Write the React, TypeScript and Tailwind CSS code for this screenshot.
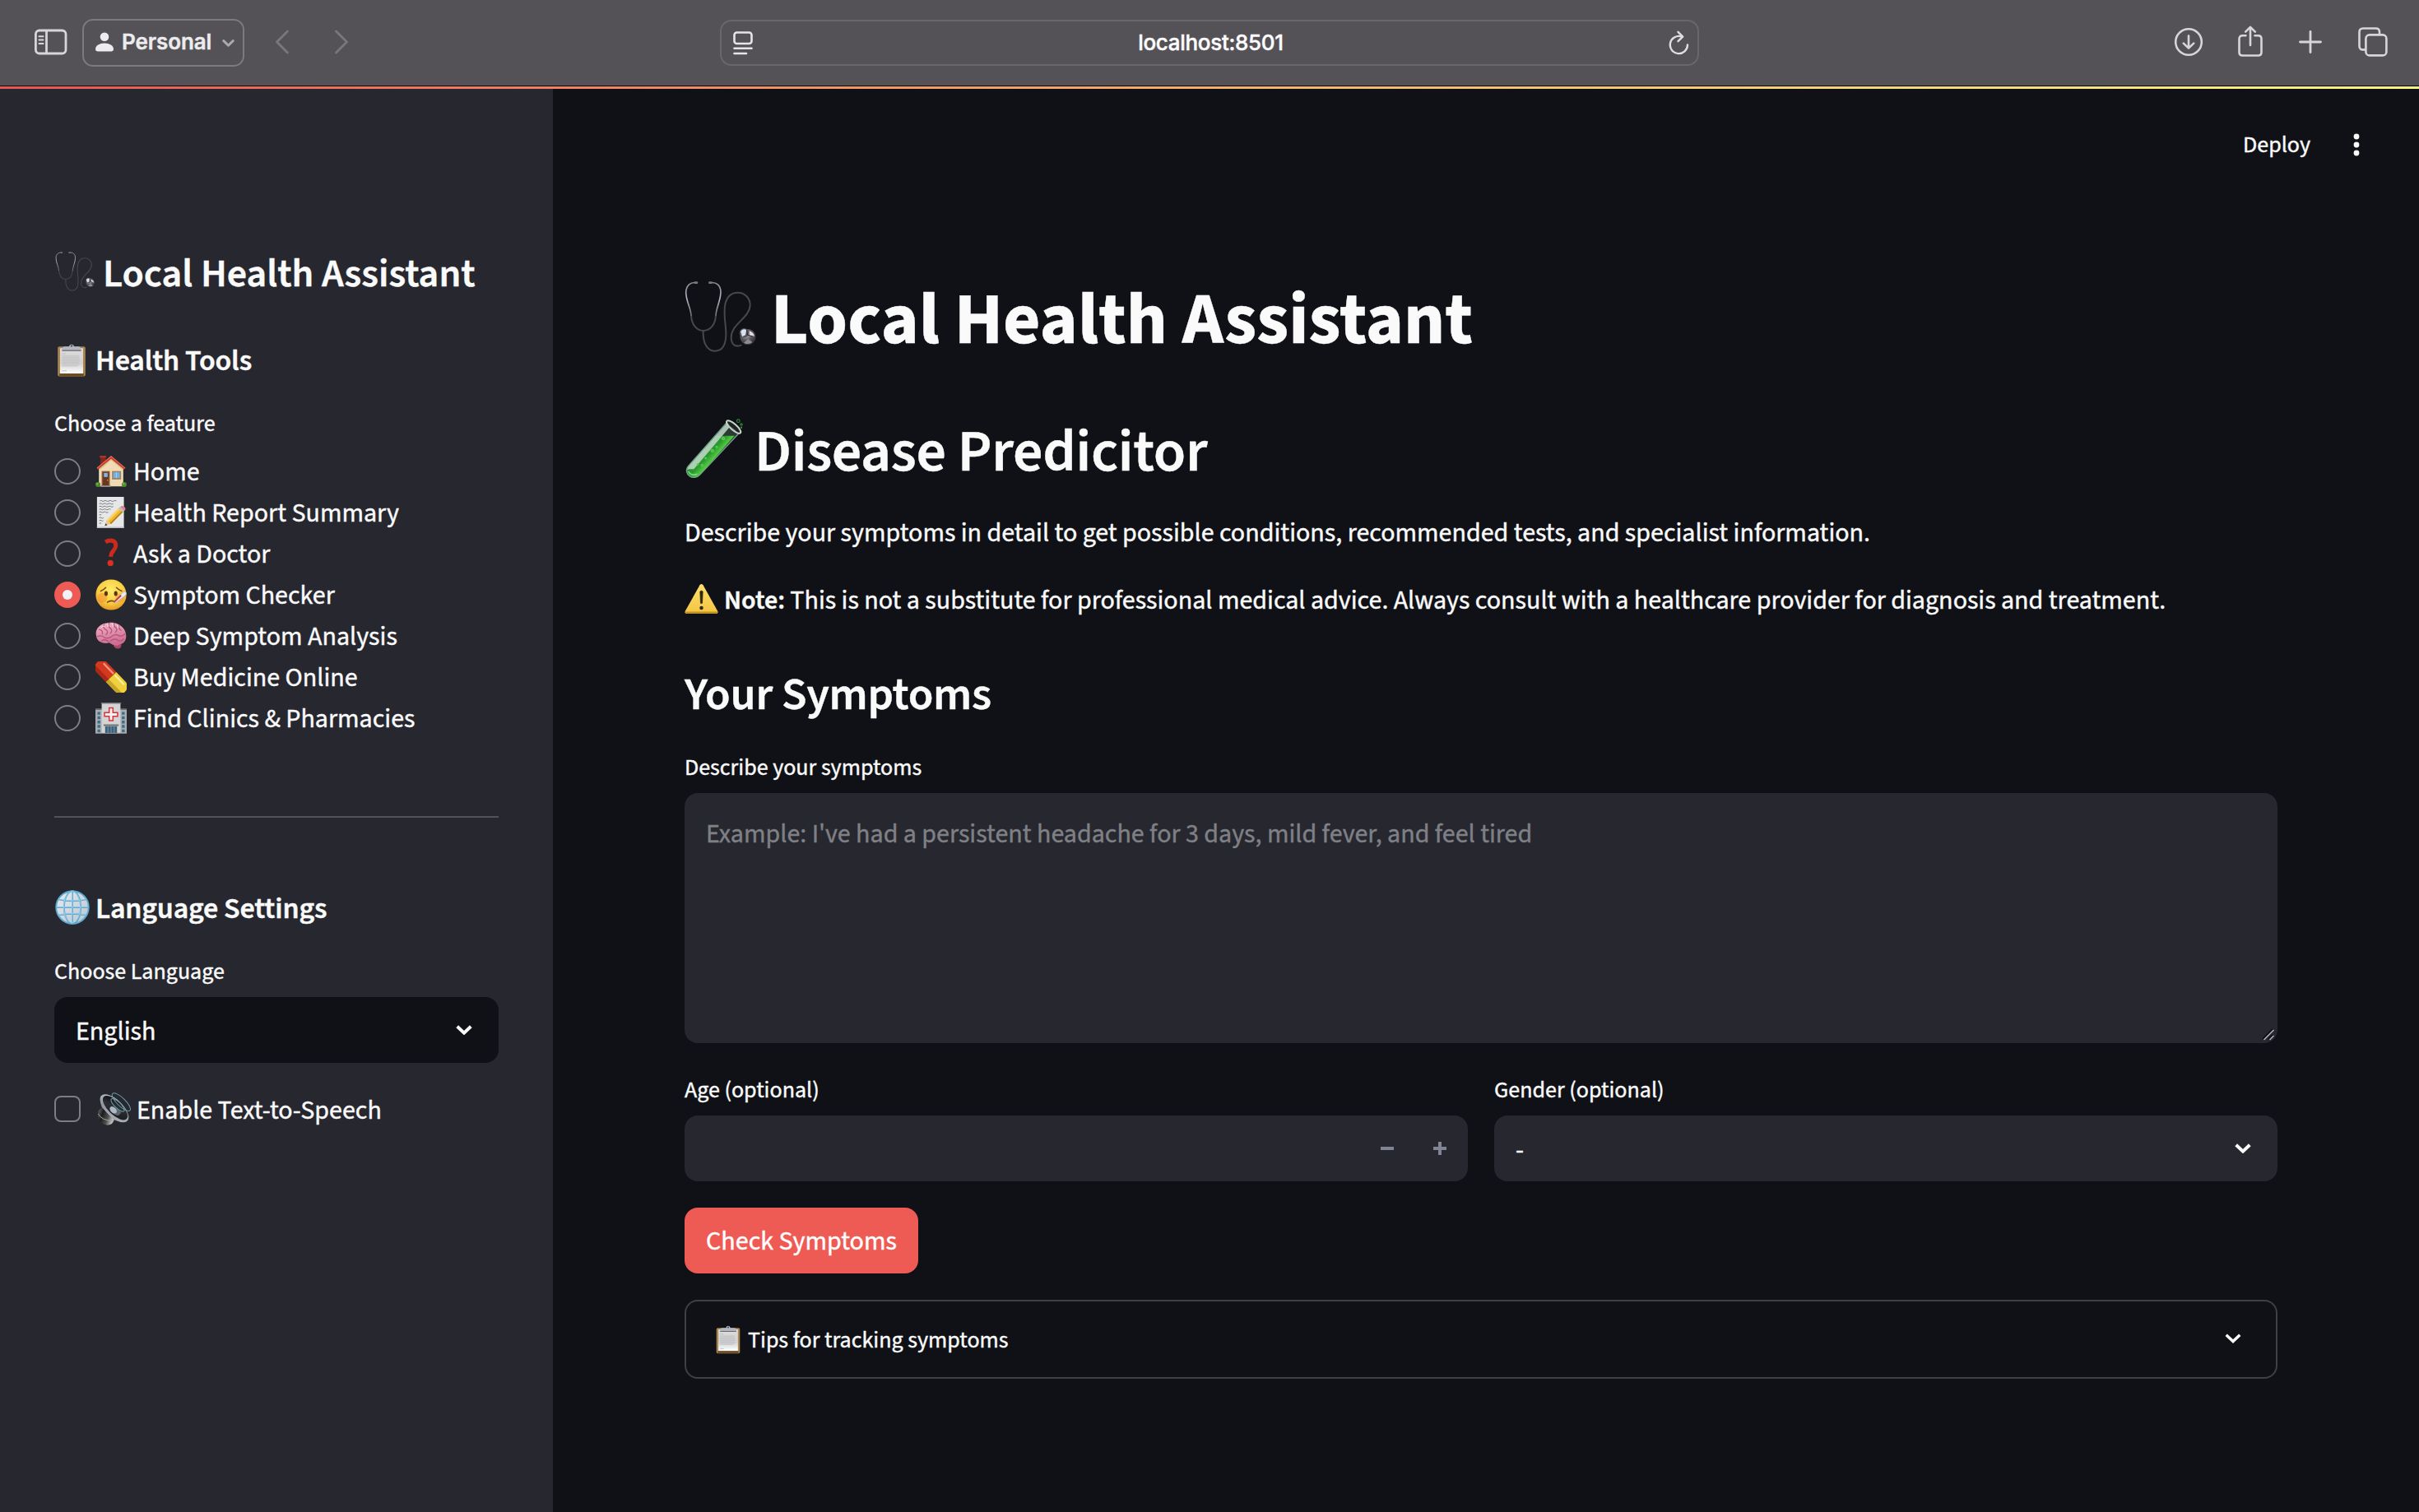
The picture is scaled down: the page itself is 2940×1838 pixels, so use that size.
import React from "react";

type IconProps = { className?: string };

/* ---------- emoji drawings ---------- */

function Stethoscope({ className }: IconProps) {
  return (
    <svg className={className} viewBox="30 60 270 270" fill="none" strokeLinecap="round">
      <defs>
        <linearGradient id="steth-arm" x1="0" y1="0" x2="0" y2="1">
          <stop offset="0" stopColor="#8b8c92" />
          <stop offset="0.5" stopColor="#b4b5bd" />
          <stop offset="1" stopColor="#6c6c72" />
        </linearGradient>
        <radialGradient id="steth-disc" cx="0.4" cy="0.35" r="0.7">
          <stop offset="0" stopColor="#b9b8bd" />
          <stop offset="0.5" stopColor="#5b595e" />
          <stop offset="1" stopColor="#2c2a2d" />
        </radialGradient>
      </defs>
      <g stroke="#48474a" strokeWidth="6">
        <path d="M60 190C62 224 80 246 104 246C130 246 148 224 150 190" />
        <path d="M104 246C102 290 118 320 146 320C174 320 187 296 187 258C187 220 177 190 184 150C190 122 206 107 230 107C256 107 276 128 275 155C272 200 206 222 206 270C206 298 222 307 242 299" />
      </g>
      <path d="M78 71C58 68 42 80 41 106C41 138 58 160 60 190" stroke="url(#steth-arm)" strokeWidth="5" />
      <path d="M130 71C152 68 168 80 168 106C167 138 152 160 150 190" stroke="url(#steth-arm)" strokeWidth="5" />
      <path d="M75 71H81M127 71H133" stroke="#77787d" strokeWidth="8" />
      <circle cx="267" cy="269" r="29" fill="url(#steth-disc)" />
      <circle cx="253" cy="254" r="17" fill="#55545a" />
      <path d="M241 250C243 241 254 238 262 243L258 262L246 268Z" fill="#d9e2ee" />
      <path d="M272 247C284 250 291 260 291 270L274 264Z" fill="#dddce0" />
      <path d="M252 290C262 296 276 295 283 288L268 276Z" fill="#8f8d92" />
      <path d="M262 243L266 262L291 268" stroke="#2d2b2f" strokeWidth="3" />
    </svg>
  );
}

function TestTube({ className }: IconProps) {
  return (
    <svg className={className} viewBox="30 560 225 225" fill="none">
      <defs>
        <linearGradient id="tube-liquid" x1="90" y1="680" x2="140" y2="725" gradientUnits="userSpaceOnUse">
          <stop offset="0" stopColor="#2e8a38" />
          <stop offset="0.55" stopColor="#2a9a2b" />
          <stop offset="1" stopColor="#5fdc4c" />
        </linearGradient>
      </defs>
      <path d="M190 580L50 738C38 752 44 768 54 775C66 784 82 781 92 770L238 618Z" fill="#2a3a35" />
      <path d="M148 628H218L92 770C82 781 66 784 54 775C44 768 38 752 50 738Z" fill="url(#tube-liquid)" />
      <path d="M190 582L52 738C45 747 44 756 52 750L70 750L204 592Z" fill="#c3d8cc" opacity="0.85" />
      <path d="M189 581L50 738C38 752 44 768 54 775C66 784 82 781 92 770L236 617" stroke="#74a283" strokeWidth="4" />
      <path d="M50 758C54 768 68 774 82 768" stroke="#7fd68c" strokeWidth="5" />
      <ellipse cx="215" cy="596" rx="33" ry="11" transform="rotate(41 215 596)" fill="#1c2622" stroke="#cfd3d0" strokeWidth="6" />
      <path d="M196 590L224 612" stroke="#8d9490" strokeWidth="3" />
      <g stroke="#62d25b" strokeWidth="3" fill="#46b944">
        <circle cx="177" cy="638" r="5" />
        <circle cx="137" cy="683" r="5" />
        <circle cx="153" cy="669" r="3" />
        <circle cx="113" cy="710" r="3" />
        <circle cx="100" cy="736" r="4" />
        <circle cx="84" cy="732" r="3" />
      </g>
      <g stroke="#2f8c36" strokeWidth="3.5">
        <circle cx="232" cy="574" r="5.5" />
        <circle cx="243" cy="587" r="3.5" />
        <circle cx="243" cy="598" r="2" />
      </g>
    </svg>
  );
}

function Clipboard({ className }: IconProps) {
  return (
    <svg className={className} viewBox="0 0 100 100">
      <defs>
        <linearGradient id="clip-paper" x1="0" y1="0" x2="0" y2="1">
          <stop offset="0" stopColor="#dcdcdc" />
          <stop offset="0.6" stopColor="#d2d2d3" />
          <stop offset="1" stopColor="#ffffff" />
        </linearGradient>
      </defs>
      <rect x="8" y="8" width="84" height="91" rx="5" fill="#ab8550" />
      <rect x="13" y="90" width="74" height="8" fill="#6c4c22" />
      <rect x="15" y="13" width="70" height="77" fill="url(#clip-paper)" />
      <path d="M21 30H33M21 37H73M21 42H75M21 47H74M21 52H76M21 57H72M21 62H75M21 67H70M21 82H35" stroke="#bbbbbd" strokeWidth="2.2" />
      <rect x="21" y="18" width="58" height="4" fill="#6d6a6a" />
      <path d="M20 18L23 11Q24 8 30 8H42Q44 1 50 1Q56 1 58 8H70Q76 8 77 11L80 18Z" fill="#b3b7c4" />
      <circle cx="50" cy="6" r="3" fill="#4a4b55" />
    </svg>
  );
}

function House({ className }: IconProps) {
  return (
    <svg className={className} viewBox="0 0 100 100">
      <path d="M16 2H33V30L16 40Z" fill="#86251c" />
      <rect x="14" y="0" width="20" height="6" fill="#a43a2c" />
      <path d="M11 40L50 5L89 40V98H11Z" fill="#f0dbb2" />
      <path d="M11 40L50 8L89 40V47L50 14L11 48Z" fill="#d9bd88" />
      <path d="M50 0L96 39L92 44L50 10L8 44L4 39Z" fill="#c63b30" />
      <path d="M50 0L96 39L94 41L50 4L6 41L4 39Z" fill="#e2685a" />
      <rect x="20" y="49" width="26" height="48" fill="#8a5a3b" />
      <rect x="24" y="53" width="18" height="42" fill="#693720" />
      <rect x="27" y="55" width="12" height="13" fill="#7db8ea" />
      <circle cx="39" cy="78" r="2" fill="#e4b545" />
      <rect x="53" y="49" width="29" height="27" fill="#a1805f" />
      <rect x="57" y="53" width="21" height="18" fill="#6fb0e6" />
      <path d="M67 53V71" stroke="#9cd0f4" strokeWidth="3" />
      <rect x="17" y="95" width="32" height="5" fill="#8f8c89" />
      <circle cx="8" cy="92" r="8" fill="#4f8a2c" />
      <circle cx="92" cy="92" r="8" fill="#4f8a2c" />
      <circle cx="6" cy="90" r="3" fill="#7ab648" />
      <circle cx="90" cy="90" r="3" fill="#7ab648" />
    </svg>
  );
}

function Memo({ className }: IconProps) {
  return (
    <svg className={className} viewBox="0 0 100 100">
      <rect x="5" y="0" width="86" height="100" fill="#e6e7e8" />
      <rect x="5" y="96" width="86" height="4" fill="#bfc0c2" />
      <path
        d="M14 13q4-3 7 0t7 0t7 0t8 0t8 0t8 0t8 0M12 22q4-3 7 0t7 0t7 0t8 0t8 0t8 0M12 31q4-3 7 0t7 0t7 0t8 0t8 0t8 0M12 40q4-3 7 0t7 0t7 0t8 0t8 0M12 49q4-3 7 0t7 0t7 0t8 0M12 58q4-3 7 0M12 67q4-3 7 0t7 0M12 76q4-3 7 0t6 0M12 85q4-3 7 0"
        fill="none"
        stroke="#6f7072"
        strokeWidth="2.4"
      />
      <path d="M30 93L36 74L48 86Z" fill="#ecc58e" />
      <path d="M30 93L32.5 85L38 90Z" fill="#333" />
      <path d="M36 75L73 37L88 48L50 87Z" fill="#f1b62f" />
      <path d="M40 79L78 41L73 37L36 75Z" fill="#f9d766" />
      <path d="M46 84L84 46L88 48L50 87Z" fill="#b97e1a" />
      <path d="M73 37L79 32L93 43L88 49Z" fill="#b9c0c6" />
      <path d="M79 32Q86 26 93 32Q99 38 93 44Z" fill="#e5808b" />
    </svg>
  );
}

function QuestionMark({ className }: IconProps) {
  return (
    <svg className={className} viewBox="0 0 100 100" fill="none">
      <path d="M32 13C45 5 66 5 65 25C64 40 50 40 49 60" stroke="#cd2a1c" strokeWidth="13" />
      <circle cx="48" cy="80" r="9.5" fill="#d9301f" />
    </svg>
  );
}

function FeverFace({ className }: IconProps) {
  return (
    <svg className={className} viewBox="0 0 100 100">
      <defs>
        <radialGradient id="fever-skin" cx="0.5" cy="0.35" r="0.65">
          <stop offset="0" stopColor="#fdec6c" />
          <stop offset="0.65" stopColor="#f9cc3f" />
          <stop offset="1" stopColor="#e39a26" />
        </radialGradient>
      </defs>
      <circle cx="50" cy="50" r="49" fill="url(#fever-skin)" />
      <circle cx="22" cy="60" r="16" fill="#f2813a" opacity="0.45" />
      <circle cx="78" cy="60" r="14" fill="#f2813a" opacity="0.35" />
      <ellipse cx="34" cy="46" rx="5.5" ry="8" fill="#5b3510" />
      <ellipse cx="65" cy="46" rx="5.5" ry="8" fill="#5b3510" />
      <path d="M17 38Q26 35 33 27M67 27Q75 35 84 38M38 74Q48 66 62 72" stroke="#7a4a14" strokeWidth="4" fill="none" strokeLinecap="round" />
      <path d="M58 72L88 42Q95 37 98 43Q101 48 95 53L63 77Z" fill="#e9edf2" stroke="#a5abb5" strokeWidth="2" />
      <path d="M59 74L82 52" stroke="#cf3336" strokeWidth="5" />
    </svg>
  );
}

function Brain({ className }: IconProps) {
  return (
    <svg className={className} viewBox="0 0 100 100">
      <defs>
        <linearGradient id="brain-fill" x1="0" y1="0" x2="0.3" y2="1">
          <stop offset="0" stopColor="#f3b4c8" />
          <stop offset="1" stopColor="#cf6d93" />
        </linearGradient>
      </defs>
      <path d="M57 76Q60 92 74 91Q86 88 82 73Z" fill="#a94a68" />
      <path d="M3 52C-3 30 12 12 34 9C60 2 88 14 96 38C103 60 92 76 78 76C66 88 52 76 44 72C30 76 6 72 3 52Z" fill="url(#brain-fill)" />
      <path
        d="M12 30Q24 30 22 44M28 14Q22 26 36 32Q42 38 34 46M44 9Q38 20 48 26Q56 32 48 42M60 9Q56 20 66 24Q72 30 64 38M76 16Q72 26 82 32M6 52Q20 46 30 56Q44 60 54 50Q66 42 76 50Q86 52 94 44M20 66Q32 58 42 68M48 66Q60 56 72 64Q80 70 90 60"
        stroke="#b45579"
        strokeWidth="3.4"
        fill="none"
        strokeLinecap="round"
      />
      <path d="M20 22Q26 16 30 20M37 14Q42 12 40 20M54 12Q58 12 56 20M70 16Q74 18 72 24" stroke="#fbdbe5" strokeWidth="3" fill="none" strokeLinecap="round" />
    </svg>
  );
}

function Pill({ className }: IconProps) {
  return (
    <svg className={className} viewBox="0 0 100 100">
      <g transform="rotate(46 50 50)">
        <path d="M50 27H8A23 23 0 0 0 8 73H50Z" fill="#d4381f" />
        <path d="M50 27H92A23 23 0 0 1 92 73H50Z" fill="#efd13d" />
        <path d="M50 60H110Q104 73 92 73H50Z" fill="#b89322" opacity="0.7" />
        <path d="M50 60H-10Q-4 73 8 73H50Z" fill="#9a2213" opacity="0.7" />
        <path d="M4 37H46" stroke="#f49a83" strokeWidth="6" strokeLinecap="round" />
        <path d="M56 37H94" stroke="#faf0a0" strokeWidth="6" strokeLinecap="round" />
      </g>
    </svg>
  );
}

function Hospital({ className }: IconProps) {
  return (
    <svg className={className} viewBox="0 0 100 100">
      <rect x="0" y="22" width="22" height="76" fill="#a9adb0" />
      <rect x="78" y="22" width="22" height="76" fill="#a9adb0" />
      <rect x="0" y="19" width="22" height="4" fill="#6a6e71" />
      <rect x="78" y="19" width="22" height="4" fill="#6a6e71" />
      <path d="M11 30V96M89 30V96" stroke="#3f6d8c" strokeWidth="9" strokeDasharray="9 5" />
      <rect x="20" y="2" width="60" height="96" fill="#d3d4d3" />
      <rect x="18" y="0" width="64" height="4" fill="#777a7b" />
      <path d="M44 17H56V32H71V44H56V58H44V44H29V32H44Z" fill="#f6f1f0" stroke="#d6343d" strokeWidth="4" />
      <rect x="26" y="70" width="48" height="5" fill="#6b6f72" />
      <rect x="31" y="76" width="38" height="22" fill="#3b617c" />
      <path d="M40 76V98M50 76V98M60 76V98" stroke="#93a7b5" strokeWidth="2" />
      <rect x="0" y="97" width="100" height="3" fill="#85898b" />
    </svg>
  );
}

function Globe({ className }: IconProps) {
  return (
    <svg className={className} viewBox="0 0 100 100">
      <defs>
        <linearGradient id="globe-fill" x1="0" y1="0" x2="1" y2="1">
          <stop offset="0" stopColor="#e8edf1" />
          <stop offset="1" stopColor="#b9c4ce" />
        </linearGradient>
      </defs>
      <circle cx="50" cy="50" r="47" fill="url(#globe-fill)" />
      <g fill="none" stroke="#5fa9cf" strokeWidth="4.5">
        <circle cx="50" cy="50" r="47" />
        <ellipse cx="50" cy="50" rx="24" ry="47" />
        <path d="M50 3V97M3 50H97M10 27Q50 36 90 27M10 73Q50 64 90 73" />
      </g>
      <g fill="none" stroke="#a9daf0" strokeWidth="1.5">
        <ellipse cx="49" cy="49" rx="24" ry="46" />
        <path d="M49 3V97M3 49H97M10 26Q50 35 90 26M10 72Q50 63 90 72" />
      </g>
    </svg>
  );
}

function Speaker({ className }: IconProps) {
  return (
    <svg className={className} viewBox="177 40 120 120">
      <defs>
        <linearGradient id="spk-body" x1="0" y1="0" x2="1" y2="0.4">
          <stop offset="0" stopColor="#6a6b6d" />
          <stop offset="0.35" stopColor="#1d1d1e" />
          <stop offset="0.7" stopColor="#4b4c4d" />
          <stop offset="1" stopColor="#b9bab9" />
        </linearGradient>
        <linearGradient id="spk-rim" x1="0" y1="0" x2="1" y2="1">
          <stop offset="0" stopColor="#c3ccd8" />
          <stop offset="0.5" stopColor="#8e969e" />
          <stop offset="1" stopColor="#b7babb" />
        </linearGradient>
        <linearGradient id="spk-cone" x1="0" y1="0" x2="1" y2="1">
          <stop offset="0" stopColor="#060607" />
          <stop offset="0.45" stopColor="#2c3035" />
          <stop offset="1" stopColor="#151617" />
        </linearGradient>
      </defs>
      <path d="M186 52C182 84 196 118 226 138L262 148L284 144Z" fill="#7b8086" />
      <path d="M178 112Q180 98 194 97L236 138Q234 156 212 159Q184 156 178 132Z" fill="url(#spk-body)" />
      <path d="M178 118Q190 142 232 144" stroke="#a4a5a6" strokeWidth="3" fill="none" />
      <ellipse cx="237" cy="98" rx="66" ry="31" transform="rotate(44 237 98)" fill="url(#spk-rim)" />
      <ellipse cx="240" cy="96" rx="58" ry="25" transform="rotate(44 240 96)" fill="url(#spk-cone)" />
      <path d="M222 98Q240 86 262 114L252 124Q232 124 222 98Z" fill="#5d656d" />
      <ellipse cx="233" cy="104" rx="15" ry="10" transform="rotate(44 233 104)" fill="#aeb9c6" />
      <g fill="none" stroke="#6f9fab" strokeWidth="3">
        <ellipse cx="262" cy="75" rx="44" ry="15" transform="rotate(44 262 75)" />
        <ellipse cx="249" cy="86" rx="32" ry="11" transform="rotate(44 249 86)" />
      </g>
    </svg>
  );
}

function Warning({ className }: IconProps) {
  return (
    <svg className={className} viewBox="0 0 100 88">
      <defs>
        <linearGradient id="warn-fill" x1="0" y1="0" x2="0" y2="1">
          <stop offset="0" stopColor="#fbe06a" />
          <stop offset="1" stopColor="#f5c443" />
        </linearGradient>
      </defs>
      <path d="M45 3Q50 -3 55 3L98 80Q101 87 94 88H6Q-1 87 2 80Z" fill="url(#warn-fill)" />
      <path d="M2 82Q1 87 6 88H94Q99 87 98 82Z" fill="#c08f25" />
      <path d="M46 22Q50 18 54 22L52.5 57H47.5Z" fill="#2f2712" stroke="#2f2712" strokeWidth="2" />
      <circle cx="50" cy="71" r="5.5" fill="#2f2712" />
    </svg>
  );
}

function Chevron({ className, width = 4 }: IconProps & { width?: number }) {
  return (
    <svg className={className} viewBox="0 0 20 12" fill="none" stroke="#fafafa" strokeWidth={width}>
      <path d="M1.7 1.7L10 9.6L18.3 1.7" />
    </svg>
  );
}

/* ---------- browser toolbar ---------- */

function BrowserBar() {
  return (
    <header className="flex h-[104px] items-center bg-[#545257]">
      <svg className="mb-[2px] ml-[42px] h-[32px] w-[40px]" viewBox="0 0 40 32" fill="none" stroke="#d8d5da" strokeWidth="2.8">
        <rect x="1.4" y="2" width="36.6" height="28" rx="4.5" />
        <path d="M14.5 2V30" />
        <path d="M5.5 9.2H10.5M5.5 13.6H10.5M5.5 18H10.5" strokeWidth="2" strokeLinecap="round" />
      </svg>
      <div className="ml-[18px] flex h-[58px] w-[197px] items-center rounded-[13px] border-2 border-[#7c7a7e] pl-[14px]">
        <svg className="-mt-[2px] h-[24px] w-[22px]" viewBox="0 0 22 24" fill="#ececee">
          <circle cx="11" cy="5.8" r="5.3" />
          <path d="M0 21C0 16.5 5 13.6 11 13.6S22 16.5 22 21Q22 23.4 19.5 23.4H2.5Q0 23.4 0 21Z" />
        </svg>
        <span className="-mt-[2px] ml-[10px] w-[110px] font-[Inter] text-[26px] leading-none font-semibold tracking-[-0.1px] text-[#ececee]">Personal</span>
        <svg className="ml-[12px] h-[9px] w-[15px]" viewBox="0 0 15 9" fill="none" stroke="#aba9ad" strokeWidth="3" strokeLinecap="round" strokeLinejoin="round">
          <path d="M1.8 1.6L7.5 7.2L13.2 1.6" />
        </svg>
      </div>
      <svg className="mb-[2px] ml-[37px] h-[30px] w-[18px]" viewBox="0 0 18 30" fill="none" stroke="#7a777c" strokeWidth="2.8" strokeLinecap="round" strokeLinejoin="round">
        <path d="M15.5 2L2.5 15L15.5 28" />
      </svg>
      <svg className="mb-[2px] ml-[54px] h-[30px] w-[18px]" viewBox="0 0 18 30" fill="none" stroke="#7a777c" strokeWidth="2.8" strokeLinecap="round" strokeLinejoin="round">
        <path d="M2.5 2L15.5 15L2.5 28" />
      </svg>

      <div className="ml-[451px] flex h-[56px] w-[1190px] items-center justify-between rounded-[14px] border-2 border-[#69676b] pr-[10px] pl-[14px]">
        <svg className="h-[30px] w-[24px]" viewBox="0 0 24 30" fill="none" stroke="#e6e4e8" strokeWidth="2.6" strokeLinecap="round">
          <rect x="1.5" y="2.5" width="21" height="13.5" rx="3" />
          <path d="M1.5 21.8H22.5M1.5 28H16" />
        </svg>
        <span className="font-[Inter] text-[26px] leading-none font-medium tracking-[-0.3px] text-[#fdfdfd]">localhost:8501</span>
        <svg className="h-[30px] w-[25px]" viewBox="0 0 25 30" fill="none" stroke="#e0dde2" strokeWidth="2.4" strokeLinecap="round" strokeLinejoin="round">
          <path d="M15.5 7.4A10.6 10.6 0 1 0 23 17.5" />
          <path d="M11.5 1.8L17.2 7.6L11.5 13.2" />
        </svg>
      </div>

      <svg className="mb-[2px] ml-[577px] h-[36px] w-[36px]" viewBox="0 0 36 36" fill="none" stroke="#d8d5da" strokeWidth="2.6" strokeLinecap="round" strokeLinejoin="round">
        <circle cx="18" cy="18" r="15.8" />
        <path d="M18 10.5V25.5M11.8 19.6L18 25.6L24.2 19.6" />
      </svg>
      <svg className="mb-[4px] ml-[42px] h-[38px] w-[30px]" viewBox="0 0 30 38" fill="none" stroke="#d8d5da" strokeWidth="2.6" strokeLinecap="round" strokeLinejoin="round">
        <path d="M9.5 12.3H5.5Q1.5 12.3 1.5 16.3V32.5Q1.5 36.5 5.5 36.5H24.5Q28.5 36.5 28.5 32.5V16.3Q28.5 12.3 24.5 12.3H20.5" />
        <path d="M15 24V2M9.2 7.6L15 1.8L20.8 7.6" />
      </svg>
      <svg className="mb-[3px] ml-[44px] h-[28px] w-[28px]" viewBox="0 0 28 28" fill="none" stroke="#d8d5da" strokeWidth="2.8" strokeLinecap="round">
        <path d="M14 1.5V26.5M1.5 14H26.5" />
      </svg>
      <svg className="mb-[2px] ml-[44px] h-[36px] w-[36px]" viewBox="0 0 36 36" fill="none" stroke="#d8d5da" strokeWidth="2.6">
        <rect x="9.4" y="9.4" width="25" height="25" rx="4.5" />
        <path d="M9.4 27.4H6Q1.5 27.4 1.5 22.9V6Q1.5 1.5 6 1.5H21.5Q26 1.5 26 6V9.4" />
      </svg>
    </header>
  );
}

/* ---------- sidebar ---------- */

const features = [
  { label: "Home", Icon: House },
  { label: "Health Report Summary", Icon: Memo },
  { label: "Ask a Doctor", Icon: QuestionMark },
  { label: "Symptom Checker", Icon: FeverFace, selected: true },
  { label: "Deep Symptom Analysis", Icon: Brain },
  { label: "Buy Medicine Online", Icon: Pill },
  { label: "Find Clinics & Pharmacies", Icon: Hospital },
];

function Sidebar() {
  return (
    <aside className="flex w-[672px] shrink-0 flex-col bg-[#26272f] pr-[66px] pl-[66px]">
      <h2 className="mt-[195px] flex h-[60px] items-center text-[48px] font-semibold">
        <Stethoscope className="-mt-[6px] h-[50px] w-[50px]" />
        <span className="ml-[9px]">Local Health Assistant</span>
      </h2>
      <h3 className="mt-[52px] flex h-[48px] items-center text-[36px] font-semibold tracking-[-0.005em]">
        <Clipboard className="mx-px -mt-[2px] h-[42px] w-[40px]" />
        <span className="ml-[8px]">Health Tools</span>
      </h3>
      <p className="mt-[32px] flex h-[40px] items-center text-[28px]">Choose a feature</p>
      <div className="mt-[13px] flex flex-col">
        {features.map(({ label, Icon, selected }) => (
          <label key={label} className="flex h-[50px] items-center text-[32px]">
            {selected ? (
              <span className="flex size-[32px] items-center justify-center rounded-full bg-[#ee5b54]">
                <span className="size-[12px] rounded-full bg-[#f0f2f6]" />
              </span>
            ) : (
              <span className="size-[32px] rounded-full border-2 border-[#7d7e84]" />
            )}
            <Icon className="ml-[18px] h-[38px] w-[38px]" />
            <span className="mt-[2px] ml-[8px]">{label}</span>
          </label>
        ))}
      </div>
      <hr className="mt-[94px] border-t-2 border-[#51525a]" />
      <h3 className="mt-[87px] flex h-[48px] items-center text-[36px] font-semibold tracking-[-0.005em]">
        <Globe className="mx-px -mt-[4px] h-[42px] w-[42px]" />
        <span className="ml-[6px]">Language Settings</span>
      </h3>
      <p className="mt-[32px] flex h-[40px] items-center text-[28px]">Choose Language</p>
      <div className="mt-[11px] flex h-[80px] items-center justify-between rounded-[16px] bg-[#0f1116] pr-[32px] pl-[26px] text-[32px]">
        <span className="mt-[3px]">English</span>
        <Chevron className="h-[12px] w-[20px]" />
      </div>
      <label className="mt-[31px] flex h-[50px] items-center text-[32px]">
        <span className="size-[32px] rounded-[8px] border-2 border-[#7d7e84]" />
        <Speaker className="ml-[21px] h-[40px] w-[40px]" />
        <span className="mt-[3px] ml-[7px]">Enable Text-to-Speech</span>
      </label>
    </aside>
  );
}

/* ---------- main column ---------- */

function MainPanel() {
  return (
    <main className="flex grow flex-col bg-[#0f1116] pr-[172px] pl-[160px]">
      <div className="-mr-[104px] mt-[43px] flex h-[50px] items-center justify-end text-[28px]">
        <span>Deploy</span>
        <svg className="ml-[48px] h-[30px] w-[16px]" viewBox="0 0 16 30" fill="#fafafa">
          <circle cx="8" cy="5" r="3.4" />
          <circle cx="8" cy="15" r="3.4" />
          <circle cx="8" cy="25" r="3.4" />
        </svg>
      </div>
      <h1 className="mt-[139px] flex h-[100px] items-center text-[88px] leading-none font-bold">
        <Stethoscope className="-mt-[10px] -ml-[2px] h-[90px] w-[90px]" />
        <span className="ml-[17px]">Local Health Assistant</span>
      </h1>
      <h2 className="mt-[70px] flex h-[80px] items-center text-[72px] leading-none font-semibold tracking-[-0.005em]">
        <TestTube className="-mt-[12px] -ml-[2px] h-[75px] w-[75px]" />
        <span className="ml-[12px]">Disease Predicitor</span>
      </h2>
      <p className="mt-[34px] flex h-[48px] items-center text-[32px]">
        Describe your symptoms in detail to get possible conditions, recommended tests, and specialist information.
      </p>
      <p className="mt-[34px] flex h-[48px] items-center text-[32px]">
        <Warning className="-mt-[4px] h-[36px] w-[41px]" />
        <span className="ml-[7px] whitespace-nowrap">
          <strong className="font-semibold">Note:</strong> This is not a substitute for professional medical advice. Always consult with a healthcare provider for diagnosis
          and treatment.
        </span>
      </p>
      <h3 className="mt-[61px] flex h-[60px] items-center text-[56px] leading-none font-semibold tracking-[-0.005em]">Your Symptoms</h3>
      <p className="mt-[38px] flex h-[40px] items-center text-[28px]">Describe your symptoms</p>
      <div className="mt-[11px] flex h-[304px] justify-between rounded-[16px] bg-[#26272f] pl-[26px]">
        <span className="mt-[26px] h-[48px] text-[32px] leading-[48px] text-[#7f8085]">Example: I've had a persistent headache for 3 days, mild fever, and feel tired</span>
        <svg className="mr-[2px] mb-[2px] h-[16px] w-[16px] self-end" viewBox="0 0 16 16" fill="none">
          <path d="M0 13L12 1M7 13L12 8" stroke="#0c0d10" strokeWidth="1.6" />
          <path d="M1.5 14L13.5 2M8.5 14L13.5 9" stroke="#b5b5b8" strokeWidth="1.5" />
        </svg>
      </div>
      <div className="mt-[37px] grid grid-cols-2 gap-[32px]">
        <div>
          <p className="flex h-[40px] items-center text-[28px]">Age (optional)</p>
          <div className="mt-[11px] flex h-[80px] items-center justify-end gap-[48px] rounded-[16px] bg-[#26272f] pr-[26px]">
            <span className="h-[4px] w-[16px] bg-[#808495]" />
            <svg className="size-[16px]" viewBox="0 0 16 16" stroke="#808495" strokeWidth="4">
              <path d="M8 0V16M0 8H16" />
            </svg>
          </div>
        </div>
        <div>
          <p className="flex h-[40px] items-center text-[28px]">Gender (optional)</p>
          <div className="mt-[11px] flex h-[80px] items-center justify-between rounded-[16px] bg-[#26272f] pr-[32px] pl-[26px] text-[32px]">
            <span className="mt-[3px]">-</span>
            <Chevron className="h-[12px] w-[20px]" />
          </div>
        </div>
      </div>
      <button className="mt-[32px] flex h-[80px] w-[284px] items-center justify-center rounded-[16px] bg-[#ee5b54] pt-[2px] text-[32px] text-white">Check Symptoms</button>
      <div className="mt-[32px] flex h-[96px] items-center justify-between rounded-[16px] border-2 border-[#3e4045] pr-[42px] pl-[34px] text-[28px]">
        <span className="flex items-center">
          <Clipboard className="h-[35px] w-[34px]" />
          <span className="mt-[2px] ml-[7px]">Tips for tracking symptoms</span>
        </span>
        <Chevron className="-mt-[2px] h-[12px] w-[20px]" width={3.4} />
      </div>
    </main>
  );
}

export default function App() {
  return (
    <div className="flex h-[1838px] w-[2940px] flex-col overflow-hidden bg-[#0f1116] font-['Source_Sans_3','Noto_Sans_CJK_SC',sans-serif] text-[#fafafa] [-webkit-text-stroke:0.4px]">
      <BrowserBar />
      <div className="h-px bg-black" />
      <div className="h-[3px] bg-linear-to-r from-[#ea5650] via-[#f6b06c] to-[#f9f783]" />
      <div className="flex grow">
        <Sidebar />
        <MainPanel />
      </div>
    </div>
  );
}
